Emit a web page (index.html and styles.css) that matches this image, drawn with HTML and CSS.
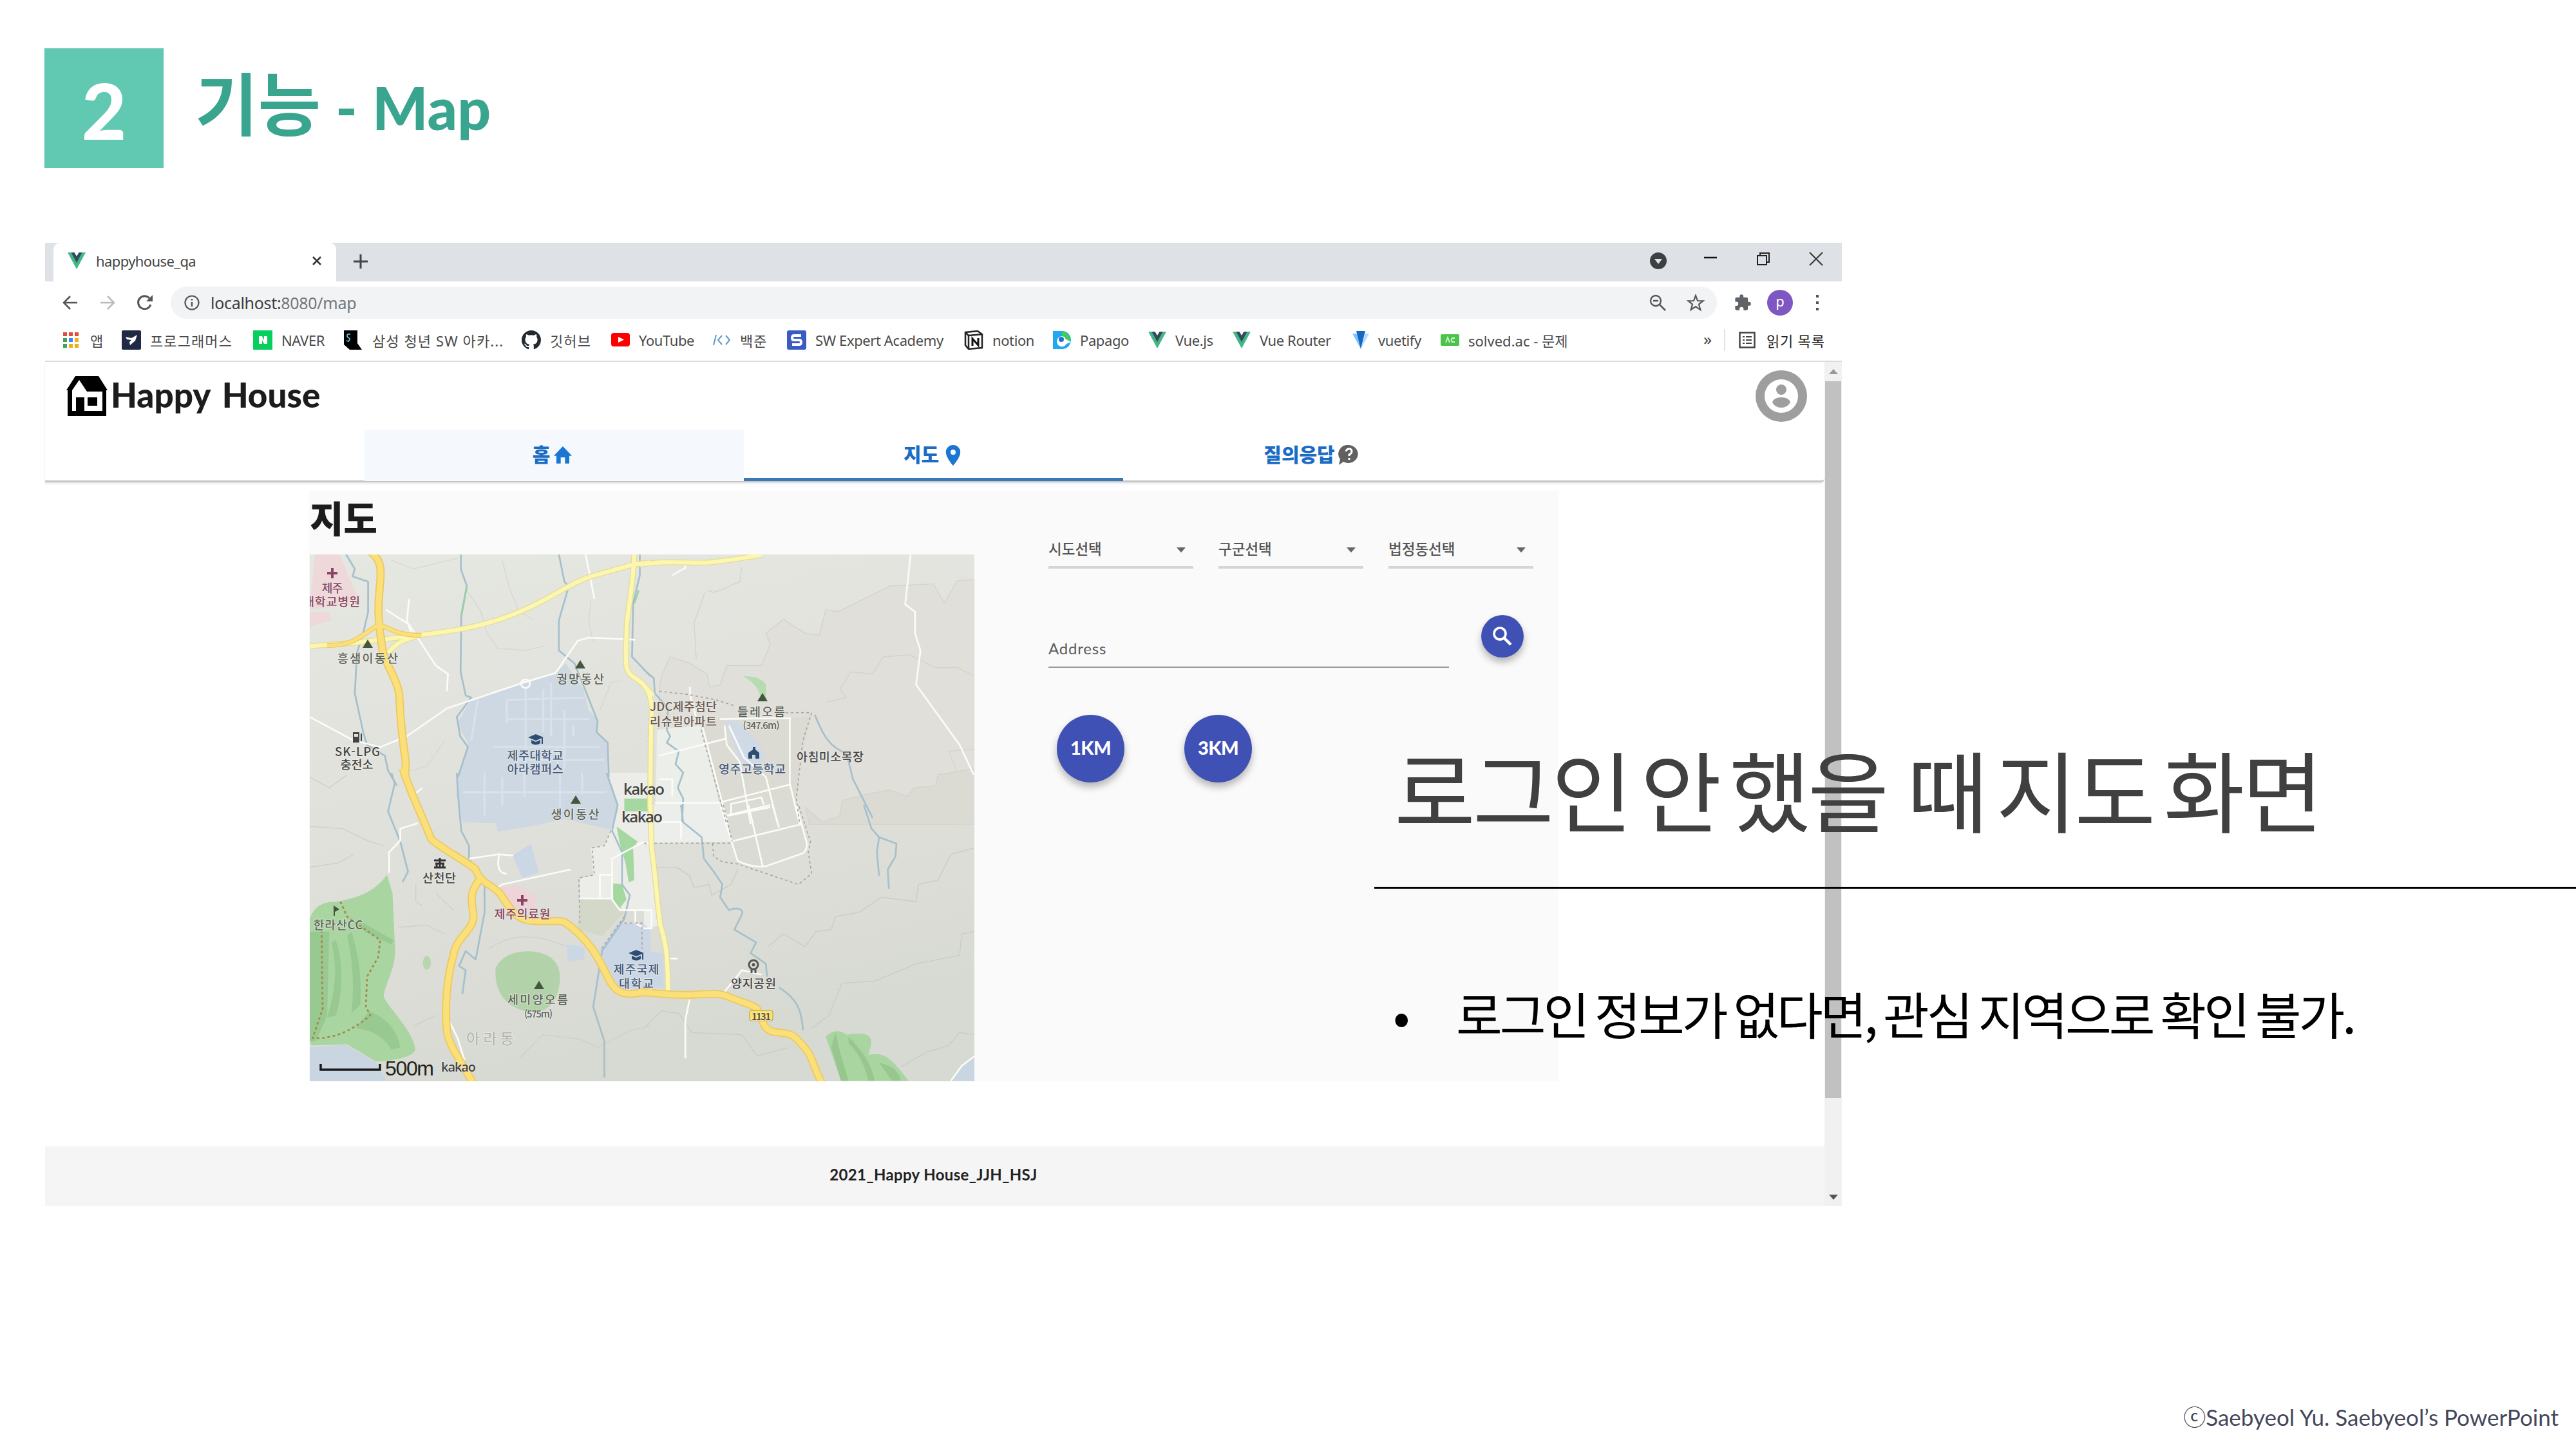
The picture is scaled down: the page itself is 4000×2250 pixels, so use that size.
FILE: index.html
```html
<!DOCTYPE html>
<html lang="ko">
<head>
<meta charset="utf-8">
<title>기능 - Map</title>
<link rel="stylesheet" href="styles.css">
</head>
<body>
<svg class="defs" width="0" height="0" aria-hidden="true">
  <symbol id="vue" viewBox="0 0 28 26"><path d="M0 0H28L14 26Z" fill="#41b883"/><path d="M5.500 0H22.500L14 16Z" fill="#34495e"/><path d="M10.500 0H17.500L14 6Z" fill="#fff"/></symbol>
  <symbol id="cap" viewBox="0 0 24 18"><path d="M12 0 24 5 12 10 0 5Z"/><path d="M5 9v5q7 5 14 0V9l-7 3Z"/><path d="M21 6h2v9h-2z"/></symbol>
</svg>
<main class="slide">
  <header class="slide-head">
    <div class="badge">2</div>
    <h1><span class="ko">기능</span><span>-</span><span>Map</span></h1>
  </header>

  <section class="browser">
    <div class="tabstrip">
      <div class="tab">
        <svg width="28" height="26"><use href="#vue"/></svg>
        <span class="tab-title">happyhouse_qa</span>
        <svg width="16" height="16" viewBox="0 0 16 16"><path d="M2 2 14 14M14 2 2 14" stroke="#333" stroke-width="2.500"/></svg>
      </div>
      <svg class="plus" width="24" height="24" viewBox="0 0 24 24"><path d="M12 1V23M1 12H23" stroke="#444" stroke-width="3"/></svg>
      <div class="win">
        <svg width="28" height="28" viewBox="0 0 28 28"><circle cx="14" cy="14" r="13" fill="#3c4043"/><path d="M8 11H20L14 19Z" fill="#dee1e6"/></svg>
        <svg width="22" height="22" viewBox="0 0 22 22"><path d="M1 9H21" stroke="#111" stroke-width="2.500"/></svg>
        <svg width="22" height="22" viewBox="0 0 22 22"><path d="M2 6H16V20H2ZM6 5V2H20V16H17" fill="none" stroke="#222" stroke-width="2"/></svg>
        <svg width="22" height="22" viewBox="0 0 22 22"><path d="M1 1 21 21M21 1 1 21" stroke="#333" stroke-width="2"/></svg>
      </div>
    </div>
    <div class="toolbar">
      <svg width="24" height="24" viewBox="0 0 24 24"><path d="M23 12H2M12 2 2 12 12 22" fill="none" stroke="#555" stroke-width="2.600"/></svg>
      <svg width="24" height="24" viewBox="0 0 24 24"><path d="M1 12H22M12 2 22 12 12 22" fill="none" stroke="#bbb" stroke-width="2.600"/></svg>
      <svg width="26" height="26" viewBox="0 0 26 26"><path d="M22 16A10 10 0 1 1 20 6" fill="none" stroke="#555" stroke-width="3"/><path d="M25 1V11H15Z" fill="#555"/></svg>
      <div class="omnibox">
        <svg width="24" height="24" viewBox="0 0 24 24"><circle cx="12" cy="12" r="10.500" fill="none" stroke="#555" stroke-width="2.200"/><path d="M12 11V18M12 6V8.500" stroke="#555" stroke-width="2.400"/></svg>
        <span class="url">localhost:<i>8080/map</i></span>
        <svg class="zoom" width="26" height="26" viewBox="0 0 26 26"><circle cx="10" cy="10" r="8" fill="none" stroke="#555" stroke-width="2.300"/><path d="M6 10H14M16 16 25 25" stroke="#555" stroke-width="2.500"/></svg>
        <svg width="28" height="28" viewBox="0 0 28 28"><path d="M14 3 17 11 25.500 11.300 19 16.500 21.300 25 14 20 6.700 25 9 16.500 2.500 11.300 11 11Z" fill="none" stroke="#555" stroke-width="2.200"/></svg>
      </div>
      <svg width="28" height="28" viewBox="0 0 24 24"><path fill="#5f6368" d="M20.500 11H19V7a2 2 0 0 0-2-2h-4V3.500a2.500 2.500 0 0 0-5 0V5H4a2 2 0 0 0-2 2v3.800h1.500a2.700 2.700 0 0 1 0 5.400H2V20a2 2 0 0 0 2 2h3.800v-1.500a2.700 2.700 0 0 1 5.400 0V22H17a2 2 0 0 0 2-2v-4h1.500a2.500 2.500 0 0 0 0-5z"/></svg>
      <div class="profile">p</div>
      <svg class="kebab" width="6" height="24" viewBox="0 0 6 24"><path d="M1 0h4v4H1zM1 10h4v4H1zM1 20h4v4H1z" fill="#555"/></svg>
    </div>
    <div class="bookmarks">
      <div class="bm"><svg width="24" height="24" viewBox="0 0 24 24"><path d="M0 0h6v6H0zM9 0h6v6H9zM18 0h6v6h-6z" fill="#e24a3c"/><path d="M0 9h6v6H0zM0 18h6v6H0z" fill="#3aa757"/><path d="M9 9h6v6H9z" fill="#4285f4"/><path d="M18 9h6v6h-6zM9 18h6v6H9zM18 18h6v6h-6z" fill="#f0ad1d"/></svg><span class="l19">앱</span></div>
      <div class="bm"><svg width="30" height="30" viewBox="0 0 30 30"><rect width="30" height="30" rx="2" fill="#1f2a44"/><path d="M6 10 15 12 24 7 21 16 13 23 12 18 15 15 8 14Z" fill="#fff"/></svg><span class="wide">프로그래머스</span></div>
      <div class="bm"><svg width="30" height="30" viewBox="0 0 30 30"><rect width="30" height="30" fill="#06cf5d"/><path d="M9 9h5l3 6V9h5v12h-5l-3-6v6H9z" fill="#fff"/></svg><span>NAVER</span></div>
      <div class="bm"><svg width="30" height="30" viewBox="0 0 30 30"><path d="M0 0H21V20L28 30H9L0 22Z" fill="#000"/><path d="M10 6Q5 5 5 8T8 12 7 17L4 16" fill="none" stroke="#6cc3d5" stroke-width="1.800"/></svg><span class="wide">삼성 청년 SW 아카...</span></div>
      <div class="bm"><svg width="30" height="30" viewBox="0 0 16 16"><path fill="#24292e" d="M8 0C3.580 0 0 3.580 0 8c0 3.540 2.290 6.530 5.470 7.590.4.070.55-.17.55-.38v-1.490c-2.010.37-2.530-.49-2.690-.94-.09-.23-.48-.94-.82-1.130-.28-.15-.68-.52-.01-.53.63-.01 1.080.58 1.230.82.720 1.210 1.870.87 2.330.66.070-.52.28-.87.51-1.070-1.780-.2-3.640-.89-3.640-3.950 0-.87.31-1.590.82-2.150-.08-.2-.36-1.020.08-2.120 0 0 .67-.21 2.200.82a7.600 7.600 0 0 1 4 0c1.530-1.040 2.200-.82 2.200-.82.44 1.100.16 1.920.08 2.120.51.56.82 1.270.82 2.150 0 3.070-1.870 3.750-3.650 3.950.29.25.54.73.54 1.480v2.200c0 .21.15.46.55.38A8 8 0 0 0 16 8c0-4.420-3.580-8-8-8z"/></svg><span class="wide">깃허브</span></div>
      <div class="bm"><svg width="29" height="21" viewBox="0 0 29 21"><rect width="29" height="21" rx="4" fill="#f00"/><path d="M11 6 20 10.500 11 15Z" fill="#fff"/></svg><span>YouTube</span></div>
      <div class="bm"><svg width="28" height="18" viewBox="0 0 28 18"><path d="M5 1 1 17M14 2 8 9 14 16M20 2 26 9 20 16" fill="none" stroke="#5b9bd0" stroke-width="2"/></svg><span class="wide">백준</span></div>
      <div class="bm"><svg width="30" height="30" viewBox="0 0 30 30"><rect width="30" height="30" rx="3" fill="#3b5bc4"/><path d="M22 8H11Q8 8 8 11.500T11 15H19Q22 15 22 18.500T19 22H8" fill="none" stroke="#fff" stroke-width="4"/></svg><span>SW Expert Academy</span></div>
      <div class="bm"><svg width="30" height="30" viewBox="0 0 30 30"><path d="M2 3 21 1 28 6V27L7 29 2 23ZM2 3 7 8V29M7 8 28 6" fill="#fff" stroke="#222" stroke-width="2.500"/><path d="M13 24V13L22 23V12" fill="none" stroke="#111" stroke-width="3"/></svg><span>notion</span></div>
      <div class="bm"><svg width="28" height="28" viewBox="0 0 28 28"><path d="M0 0H14A14 14 0 0 1 14 28H0Z" fill="#20a8f0"/><path d="M14 1A13 13 0 0 1 27 16L14 13Z" fill="#3ecf5a"/><path d="M19 12 28 17 21 20A8 8 0 1 1 19 10" fill="#fff"/><circle cx="13" cy="13" r="4" fill="#2a6fd0"/></svg><span>Papago</span></div>
      <div class="bm"><svg width="28" height="26"><use href="#vue"/></svg><span>Vue.js</span></div>
      <div class="bm"><svg width="28" height="26"><use href="#vue"/></svg><span>Vue Router</span></div>
      <div class="bm"><svg width="26" height="28" viewBox="0 0 26 28"><path d="M0 4H8L13 28Z" fill="#7bc6ff"/><path d="M6 0H20L13 28Z" fill="#1867c0"/><path d="M20 4H26L13 28Z" fill="#aeddff"/></svg><span>vuetify</span></div>
      <div class="bm"><svg width="29" height="18" viewBox="0 0 29 18"><rect width="29" height="18" rx="2" fill="#4cc44c"/><path d="M8 13 11 5 14 13M22 6H18L16.500 9 18 12H22" fill="none" stroke="#d6f5d6" stroke-width="1.800"/></svg><span class="solved">solved.ac - 문제</span></div>
      <div class="bm more">»</div>
      <div class="bm reading"><svg width="26" height="26" viewBox="0 0 26 26"><path d="M1.500 1.500H24.500V24.500H1.500Z" fill="none" stroke="#444" stroke-width="2.500"/><path d="M6 8h3M6 13h3M6 18h3M11 8h9M11 13h9M11 18h9" stroke="#444" stroke-width="2"/></svg><span>읽기 목록</span></div>
    </div>

    <div class="viewport">
      <div class="page">
        <header class="app-head">
          <div class="brand">
            <svg width="64" height="62" viewBox="0 0 64 62"><path d="M14 0H50L64 22H62V62H2V22H0Z"/><path d="M20 6 32 24H56V54H9V22Z" fill="#fff"/><path d="M33 33H48V46H33ZM15 33H28V56H15Z"/></svg>
            <span>Happy House</span>
            <svg class="account" width="80" height="80" viewBox="0 0 80 80"><circle cx="40" cy="40" r="40" fill="#9e9e9e"/><circle cx="40" cy="40" r="26" fill="#fff"/><circle cx="40" cy="30" r="8" fill="#9e9e9e"/><path d="M26 50Q28 42 40 42T54 50Q49 58 40 58T26 50Z" fill="#9e9e9e"/></svg>
          </div>
          <nav class="tabs">
            <a class="hover">홈<svg width="32" height="28" viewBox="0 0 24 21"><path fill="#1976d2" d="M9.500 20v-7h5v7h5v-9h3L12 0 1.500 11h3v9z"/></svg></a>
            <a class="active">지도<svg class="pin" width="24" height="32" viewBox="0 0 14 20"><path fill="#1976d2" fill-rule="evenodd" d="M7 0a7 7 0 0 0-7 7c0 5.200 7 13 7 13s7-7.800 7-13a7 7 0 0 0-7-7m0 9.500A2.500 2.500 0 1 1 7 4.500a2.500 2.500 0 0 1 0 5z"/></svg></a>
            <a>질의응답<svg class="help" width="34" height="32" viewBox="0 0 34 32"><path d="M18 0A15 14 0 1 1 9 26L2 31 4 22A15 14 0 0 1 18 0Z" fill="#616161"/><path d="M13 10Q14 6 18 6T22 10Q22 13 18 15V17M18 20V23" fill="none" stroke="#fff" stroke-width="3"/></svg></a>
          </nav>
        </header>

        <div class="content">
          <div class="map-col">
            <h2>지도</h2>
            <svg class="map" width="1032" height="818" viewBox="481 861 1032 818">
              <defs>
                <linearGradient id="ground" x1="0" y1="0" x2=".25" y2="1"><stop offset="0" stop-color="#e5e7e1"/><stop offset=".5" stop-color="#e1e1dc"/><stop offset="1" stop-color="#d7dad2"/></linearGradient>
              </defs>
              <rect x="481" y="861" width="1032" height="818" fill="url(#ground)"/>
              <!-- land shading -->
              <g transform="translate(1000 850) scale(.338 .3333)" fill="#e0dfda" stroke="#d3d3cb" stroke-width="4">
                <path d="M80 600 120 510 210 540 290 590 300 650 350 640 380 550 540 550 580 450 560 400 640 335 740 400 805 410 835 290 890 300 1130 180 1330 170 1380 260 1440 155 1518 150V1290H60L70 670Z"/>
                <path d="M840 720 930 700 900 660 950 580 1050 590 1100 510 1220 500 1340 560 1440 560 1518 600" fill="none"/>
                <path d="M1518 1060 1440 1050 1400 950 1518 940M240 520 230 350 280 210M290 200 320 210 350 200 440 160 450 90" fill="none"/>
                <path d="M1020 1150 1130 1130 1210 1160 1240 1120 1340 1110 1350 1060 1518 1030V1290H760L740 1210 820 1280 900 1250 910 1180Z" fill="#dbdbd4"/>
              </g>
              <g transform="translate(1000 1250) scale(.338 .3333)" fill="none" stroke="#c9ccc4" stroke-width="4">
                <path d="M0 290H150L210 330 230 385 300 370 310 420 400 370 430 300M570 660 640 600 740 660 790 590 860 580 880 520 990 500 1090 430 1250 450 1260 370 1350 350 1410 230 1518 200"/>
                <path d="M770 1040 850 980 910 830 1060 820 1250 740 1450 700 1460 600 1518 590M0 1040 80 960 160 970 220 1060 450 1070 520 1170 660 1130"/>
                <path d="M1180 1220 1300 1150 1400 1120 1450 1060 1518 1070"/>
              </g>
              <g transform="translate(470 750) scale(.3444 .3333)" fill="none" stroke="#d6d7d0" stroke-width="4">
                <path d="M900 360 930 480 970 590 1040 640M740 500 800 590 830 700 880 770 1000 780 1090 760M1300 540 1290 650 1310 740M400 360 500 400 700 350M480 1340 560 1320 640 1200M1340 1060 1390 930 1440 920"/>
              </g>
              <g transform="translate(470 1200) scale(.3444 .3333)" fill="none" stroke="#cfcfc8" stroke-width="4">
                <path d="M32 250 180 260 300 320 370 340M32 440 160 420 230 380M430 720 560 710 640 750M510 520V600L540 620M840 820Q1000 700 1250 840M500 1180 600 1130M980 1330 1080 1220 1250 1240 1330 1280 1480 1200 1568 1180M32 20 120 70 200 10M600 560 680 640"/>
              </g>
              <!-- zones -->
              <g transform="translate(470 750) scale(.3444 .3333)">
                <path d="M55 332H165L260 560 32 590ZM32 600 115 600 130 640 32 670Z" fill="#eed8d9"/>
                <path d="M1185 840 1265 960 1290 1060 1330 1100V1160L1375 1210 1370 1350H705L745 1210 695 1120 760 1010 980 935 1140 890Z" fill="#cdd8e2"/>
                <path d="M920 1010 1270 1000M920 1010V1120M1005 960V1330M1085 960V1160M1120 930V1180M920 1100H1290M1180 1060V1330M860 1230H1340M1220 1130V1180M960 1290H1360M790 1010 760 1200M1150 1240V1340" stroke="#d9e2ec" stroke-width="9" fill="none"/>
              </g>
              <g transform="translate(1000 850) scale(.338 .3333)">
                <path d="M60 850 260 830 400 1370 50 1370Z" fill="#eceee9"/>
                <path d="M260 830 350 800H670L770 780 720 990 700 1170 715 1290H370Z" fill="#dbdbd4"/>
                <path d="M370 810H430L530 920 560 980 500 1030 440 990Z" fill="#d0dae6"/>
                <path d="M455 600Q540 600 560 640V705H535Q530 640 455 600Z" fill="#b5dcae"/>
              </g>
              <g transform="translate(1000 1250) scale(.338 .3333)">
                <path d="M350 0 430 260 540 290 740 220 750 180 700 0Z" fill="#dbdbd5"/>
                <path d="M0 0H350L400 170 50 178 0 170ZM0 178H30L75 560 0 580Z" fill="#eceeeb"/>
                <path d="M0 680 90 690V850H0Z" fill="#ccd7e5"/>
                <path d="M835 1080C860 1050 900 1045 930 1070 1000 1060 1060 1060 1040 1130L1030 1165C1100 1150 1130 1170 1215 1285H905Z" fill="#a9d5a0"/>
                <path d="M880 1060 900 1150 940 1285H905L860 1130ZM940 1080Q1040 1180 1060 1285H1030Q1010 1180 940 1110ZM1080 1200Q1170 1220 1180 1285H1140Z" fill="#97c78f"/>
                <path d="M1410 1285 1460 1215 1518 1170V1285Z" fill="#c9d6e2"/>
                <path d="M1410 1285 1460 1215 1518 1170" fill="none" stroke="#fbfbf8" stroke-width="8"/>
              </g>
              <g transform="translate(470 1200) scale(.3444 .3333)">
                <path d="M703 0H1370L1420 110V170L1390 265 1180 215 1050 245 880 275 870 235 720 230 700 100Z" fill="#cdd8e2"/>
                <path d="M720 90H1370M820 0V200M900 20V150M1000 0V110M1160 0V160M1260 0V100" stroke="#d9e2ec" stroke-width="9" fill="none"/>
                <path d="M1370 0H1568V640H1430L1400 600 1250 585V490L1310 480 1300 350 1360 340 1390 265 1425 170Z" fill="#ecede9"/>
                <path d="M1250 590H1400L1450 650 1350 760 1240 730Z" fill="#d3d8c8"/>
                <path d="M1450 120H1568V180H1450ZM1415 250 1510 320 1490 350 1495 500 1470 510 1455 420 1430 330ZM1400 515 1440 520 1460 590 1430 630 1400 600Z" fill="#a5d8a0"/>
                <path d="M380 475 405 560 415 790C430 900 370 980 365 1040 380 1090 500 1200 508 1290 500 1320 430 1340 330 1345L200 1265 40 1270 32 1250V680C60 600 120 600 160 600 250 580 320 560 380 475Z" fill="#a9d5a0"/>
                <path d="M32 740H120L110 1130 60 1250H32ZM240 680 410 780 400 800 280 740ZM150 780Q200 950 150 1130L110 1140Q170 950 130 790ZM220 740Q270 900 260 1080L220 1120Q240 930 200 760ZM300 1110Q420 1160 440 1280L400 1290Q350 1200 240 1190Z" fill="#98c990"/>
                <path d="M32 1280 190 1265 330 1350 380 1440H32Z" fill="#c9d6e2"/>
                <path d="M870 910C900 850 950 835 1010 832 1080 830 1160 860 1160 950 1160 1060 1100 1120 1040 1115 960 1110 860 1060 870 910Z" fill="#b2d3aa"/>
                <ellipse cx="560" cy="885" rx="18" ry="32" fill="#b9d5ad"/>
                <path d="M870 540 960 525 1055 580 1040 640H920Z" fill="#eed3d8"/>
                <path d="M1340 830 1420 700 1530 700 1568 730V1000L1440 1010 1390 950ZM945 385 1030 330 1065 465 990 490ZM1190 800 1270 810V870L1195 880Z" fill="#ccd7e6"/>
              </g>
              <!-- streams -->
              <g fill="none" stroke="#a6c0cb" stroke-width="8" stroke-linejoin="round">
                <path transform="translate(470 750) scale(.3444 .3333)" d="M195 332 235 400 225 435 295 460V600L275 690 245 790 235 980 275 1170 290 1220 370 1270 385 1340 425 1410M713 332V400L740 480 715 620 712 880 735 990 760 1000 695 1090 710 1180 745 1230 700 1370M1155 332 1180 460 1200 480 1155 640V780L1225 840 1280 980 1330 1110 1325 1160 1375 1210 1380 1370M1520 332V430L1490 560 1485 810 1568 900"/>
                <path transform="translate(470 1200) scale(.3444 .3333)" d="M400 0 415 50 385 180 440 320 475 460 450 510M695 0 700 100 715 270 750 340V400L820 520V650L780 870 735 830 705 900 735 920 720 1030M1370 0 1420 150 1395 270 1440 370V520L1475 570 1450 680 1350 830 1310 1090 1360 1250V1420"/>
                <path transform="translate(1000 850) scale(.338 .3333)" d="M0 570 45 610 50 680 110 750 105 850 120 880 105 910 160 950 145 1010 180 1050 155 1120 180 1170 175 1280M785 780C820 870 850 930 930 960L960 1080 1050 1260"/>
                <path transform="translate(1000 1250) scale(.338 .3333)" d="M170 0 180 80 265 150 275 250 320 310 360 370 350 430 390 490C430 475 460 485 450 510L415 580 515 640 490 690 560 740 565 800M620 850C700 900 725 950 730 1050M1010 0 1045 110 1080 150 1160 180 1155 240 1120 300 1125 390M1080 150 1070 220 1080 330"/>
                <path transform="translate(470 750) scale(.3444 .3333)" d="M1515 500 1495 560M740 480 715 620" stroke="#9bcda6"/>
              </g>
              <!-- minor roads -->
              <g fill="none" stroke="#fbfbf8" stroke-width="8" stroke-linejoin="round">
                <path transform="translate(470 750) scale(.3444 .3333)" d="M32 1090 230 1200 350 1230 470 1180 650 1050 980 935 1140 885 1240 735 1290 720 1500 730M375 590 480 660 530 740 600 850 655 890 650 970M480 540 470 640 490 700M1275 332 1295 430 1315 540M985 935a20 20 0 1 0 40 0a20 20 0 1 0-40 0"/>
                <path transform="translate(470 1200) scale(.3444 .3333)" d="M390 465V370L440 315V260L520 235M750 400 880 380 950 385M885 385Q870 470 920 470M870 540 900 520 1210 450M1395 400 1530 325H1568M1395 400V590L1430 640H1568M1340 580V475H1390M1250 585H1390M665 1165 700 1240 730 1340M1500 640V700L1540 725M510 95 540 70"/>
                <path transform="translate(1000 850) scale(.338 .3333)" d="M1225 35 1200 265 1245 300V400L1270 480 1250 640 1450 920 1515 1060M270 840 385 1290M70 970 380 890M370 830 380 920 440 1000 490 1290M350 800 670 795V1100L715 1290M390 830 460 980 560 1070 615 1290M360 1185 670 1105M375 1250 580 1200M400 1240V1195L540 1165 550 1200M50 1190H350M190 70V95L130 130M210 650 215 700 250 830M70 1080H130V1160"/>
                <path transform="translate(1000 1250) scale(.338 .3333)" d="M350 0 430 260Q500 295 560 285L730 225Q760 200 740 150L700 0M400 170 720 90M385 50 580 10M480 0 545 285M590 0 620 105M210 905 190 1000V1180M370 870 450 770 540 790M120 715H155M0 490H35V575H0M60 80H170V160"/>
              </g>
              <g fill="none" stroke="#a9a69c" stroke-width="5" stroke-dasharray="12 12">
                <path transform="translate(1000 850) scale(.338 .3333)" d="M70 670 200 685 330 710 420 740M650 770H770L730 900 700 1170 715 1290M262 850 380 1290M20 850V1290"/>
                <path transform="translate(1000 1250) scale(.338 .3333)" d="M0 178H400M315 180 320 240 360 265 430 275 710 370 770 320 755 220 765 170 710 0M365 0 405 170M45 180 90 610"/>
                <path transform="translate(470 1200) scale(.3444 .3333)" d="M1390 270 1360 340 1305 350 1315 475 1245 490 1250 700M1450 670 1340 830M1450 700H1530V820"/>
                <path transform="translate(470 1200) scale(.3444 .3333)" d="M170 600 200 670 350 780 340 860 290 950 285 1090 305 1130C200 1220 120 1240 45 1235L90 1100 85 740" stroke="#a58a50" stroke-width="8"/>
              </g>
              <!-- main roads -->
              <g fill="none" stroke-linejoin="round">
                <g stroke="#e3dc9c" stroke-width="27">
                  <path transform="translate(470 750) scale(.3444 .3333)" d="M32 760 230 745 510 710C700 690 850 660 1000 590 1150 520 1200 470 1300 435L1490 380 1568 370M1495 332C1490 500 1460 600 1460 700 1455 850 1450 880 1500 910 1550 940 1545 960 1580 990M385 790C420 750 450 730 510 715"/>
                  <path transform="translate(1000 850) scale(.338 .3333)" d="M-20 80C100 60 200 75 300 70 400 60 450 50 540 35M-10 630C40 680 40 750 32 850L28 1200 30 1230"/>
                  <path transform="translate(1000 1250) scale(.338 .3333)" d="M30 0 35 200C50 300 60 450 75 560 100 640 110 700 110 870"/>
                </g>
                <g stroke="#fcf6ae" stroke-width="19">
                  <path transform="translate(470 750) scale(.3444 .3333)" d="M32 760 230 745 510 710C700 690 850 660 1000 590 1150 520 1200 470 1300 435L1490 380 1568 370M1495 332C1490 500 1460 600 1460 700 1455 850 1450 880 1500 910 1550 940 1545 960 1580 990M385 790C420 750 450 730 510 715"/>
                  <path transform="translate(1000 850) scale(.338 .3333)" d="M-20 80C100 60 200 75 300 70 400 60 450 50 540 35M-10 630C40 680 40 750 32 850L28 1200 30 1230"/>
                  <path transform="translate(1000 1250) scale(.338 .3333)" d="M30 0 35 200C50 300 60 450 75 560 100 640 110 700 110 870"/>
                </g>
                <g stroke="#ecc964" stroke-width="37">
                  <path transform="translate(470 750) scale(.3444 .3333)" d="M305 320C370 370 350 430 345 520 335 620 350 700 360 780 380 860 420 900 435 980 440 1100 450 1200 465 1300L462 1360"/>
                  <path transform="translate(470 750) scale(.3444 .3333)" stroke-width="22" d="M110 758C250 755 270 700 345 660 400 680 430 710 535 710"/>
                  <path transform="translate(470 1200) scale(.3444 .3333)" d="M452 -20C480 80 530 180 580 310 650 370 720 400 780 450 800 520 880 530 900 580 930 620 960 690 1040 690 1100 695 1150 685 1180 695 1300 780 1340 880 1370 940 1400 1010 1430 1030 1480 1030L1568 1020M795 500C740 580 770 600 770 680 760 740 690 770 680 850 650 950 640 1100 650 1200 660 1280 720 1350 770 1450"/>
                  <path transform="translate(1000 1250) scale(.338 .3333)" d="M-20 870C60 880 120 885 200 885 300 880 340 875 380 890 450 920 500 930 520 950 550 1030 560 1060 620 1060 680 1065 690 1075 720 1110 780 1170 770 1210 820 1300"/>
                </g>
                <g stroke="#fbdf78" stroke-width="26">
                  <path transform="translate(470 750) scale(.3444 .3333)" d="M305 320C370 370 350 430 345 520 335 620 350 700 360 780 380 860 420 900 435 980 440 1100 450 1200 465 1300L462 1370"/>
                  <path transform="translate(470 750) scale(.3444 .3333)" stroke-width="15" d="M110 758C250 755 270 700 345 660 400 680 430 710 535 710"/>
                  <path transform="translate(470 1200) scale(.3444 .3333)" d="M452 -20C480 80 530 180 580 310 650 370 720 400 780 450 800 520 880 530 900 580 930 620 960 690 1040 690 1100 695 1150 685 1180 695 1300 780 1340 880 1370 940 1400 1010 1430 1030 1480 1030L1575 1020M795 500C740 580 770 600 770 680 760 740 690 770 680 850 650 950 640 1100 650 1200 660 1280 720 1350 770 1450"/>
                  <path transform="translate(1000 1250) scale(.338 .3333)" d="M-20 870C60 880 120 885 200 885 300 880 340 875 380 890 450 920 500 930 520 950 550 1030 560 1060 620 1060 680 1065 690 1075 720 1110 780 1170 770 1210 820 1300"/>
                </g>
              </g>
              <!-- markers -->
              <g fill="#45563f">
                <path d="M571 993 579 1006H563ZM901 1025 909 1038H893ZM894 1235 902 1248H886ZM837 1523 845 1536H829ZM1184 1076 1192 1089H1176Z"/>
                <path d="M518 1406 527 1412 520 1416V1422H518Z"/>
              </g>
              <path d="M516 882V898M508 890H524M811 1390V1406M803 1398H819" stroke="#8a4560" stroke-width="4"/>
              <g fill="#2f4d73"><use href="#cap" x="820" y="1140" width="24" height="18"/><use href="#cap" x="976" y="1475" width="24" height="18"/><path d="M1162 1178V1169L1169 1164V1160H1173V1164L1179 1169V1178H1173V1172H1168V1178Z"/></g>
              <path fill="#444" fill-rule="evenodd" d="M548 1137h10v16h-10zM550 1140v4h6v-4zM560 1139h2v12h-2z"/>
              <path d="M674 1336H692M676 1341H690M678 1341V1348M683 1332V1348M688 1341V1348M674 1347H692" stroke="#333" stroke-width="3"/>
              <g fill="none" stroke="#555" stroke-width="3"><circle cx="1170" cy="1498" r="7"/><path d="M1167 1505V1511M1173 1505V1511"/></g>
              <circle cx="1170" cy="1498" r="2.500" fill="#555"/>
              <rect x="1164" y="1569" width="36" height="16" rx="3" fill="#fbe26e" stroke="#b99b2d"/>
              <g class="labels">
                <g fill="#8a4560"><text x="516" y="912" textLength="33">제주</text><text x="515" y="933" textLength="88">대학교병원</text><text x="811" y="1418" textLength="87">제주의료원</text></g>
                <g fill="#5c6258"><text x="571" y="1021" textLength="94">흥샘이동산</text><text x="901" y="1053" textLength="74">궝망동산</text><text x="893" y="1263" textLength="75">생이동산</text><text x="835" y="1551" textLength="94">세미양오름</text><text x="836" y="1573" textLength="44" class="sm">(575m)</text><text x="1182" y="1104" textLength="74">들레오름</text><text x="1182" y="1125" textLength="57" class="sm">(347.6m)</text><text x="525" y="1435" textLength="77">한라산CC</text></g>
                <g fill="#444"><text x="555" y="1166" textLength="70">SK-LPG</text><text x="554" y="1186" textLength="51">충전소</text><text x="682" y="1362" textLength="52">산천단</text><text x="1170" y="1526" textLength="70">양지공원</text><text x="1289" y="1174" textLength="104">아침미소목장</text></g>
                <g fill="#44597a"><text x="831" y="1172" textLength="87">제주대학교</text><text x="831" y="1193" textLength="87">아라캠퍼스</text><text x="1168" y="1193" textLength="104">영주고등학교</text><text x="988" y="1504" textLength="71">제주국제</text><text x="988" y="1526" textLength="54">대학교</text></g>
                <g fill="#6b584c"><text x="1061" y="1096" textLength="104">JDC제주첨단</text><text x="1061" y="1119" textLength="104">리슈빌아파트</text></g>
                <text x="761" y="1611" textLength="74" fill="#b0b0ac" class="dong">아라동</text>
                <text x="1182" y="1577" textLength="30" class="sm bold" fill="#6b5412">1131</text>
                <g class="kakao" fill="#454545"><text x="1000" y="1224" textLength="64">kakao</text><text x="997" y="1267" textLength="64">kakao</text><text x="712" y="1656" textLength="54" class="k-sm">kakao</text></g>
                <text x="636" y="1659" textLength="76" class="scale" fill="#222">500m</text>
              </g>
              <path d="M498 1652V1661H590V1652" fill="none" stroke="#1a1a1a" stroke-width="3.500"/>
            </svg>
          </div>
          <form class="filters">
            <div class="selects">
              <div class="select">시도선택<i></i></div>
              <div class="select">구군선택<i></i></div>
              <div class="select">법정동선택<i></i></div>
            </div>
            <div class="search">
              <div class="address">Address</div>
              <div class="fab small"><svg width="32" height="32" viewBox="0 0 32 32"><circle cx="12" cy="12" r="9" fill="none" stroke="#fff" stroke-width="3.600"/><path d="M18 18 29 29" stroke="#fff" stroke-width="4.500"/></svg></div>
            </div>
            <div class="ranges"><div class="fab">1KM</div><div class="fab">3KM</div></div>
          </form>
        </div>
        <footer class="app-foot">2021_Happy House_JJH_HSJ</footer>
      </div>
      <div class="scrollbar"><i class="up"></i><div class="thumb"></div><i class="down"></i></div>
    </div>
  </section>

  <section class="caption">
    <h3><span>로그인</span><span>안</span><span>했을</span><span>때</span><span>지도</span><span>화면</span></h3>
    <p><span class="dot">•</span><span>로그인 정보가 없다면, 관심 지역으로 확인 불가.</span></p>
  </section>
  <footer class="credit">ⓒSaebyeol Yu. Saebyeol’s PowerPoint</footer>
</main>
</body>
</html>
```
FILE: styles.css
```css
* { box-sizing: border-box; }
body { margin: 0; background: #fff; }
svg { display: block; flex: none; }
.defs { position: absolute; }
i { font-style: normal; }

.slide {
  position: relative;
  width: 4000px;
  height: 2250px;
  padding: 75px 0 0 69px;
  overflow: hidden;
  background: #fff;
  font-family: "Noto Sans", "Noto Sans CJK KR", sans-serif;
}

/* slide heading */
.slide-head { display: flex; height: 186px; }
.badge {
  width: 185px;
  height: 186px;
  background: #61c8b2;
  color: #fff;
  font: 900 120px/192px Lato, sans-serif;
  text-align: center;
}
.slide-head h1 {
  display: flex;
  align-items: baseline;
  margin: 0 0 0 49px;
  padding-top: 6px;
  color: #3aa58f;
  font: 900 91px/150px Lato, sans-serif;
}
.slide-head h1 span + span { margin-left: 23px; }
.slide-head .ko { font: 700 106px/150px "Noto Sans CJK KR", sans-serif; }

/* browser chrome */
.browser { width: 2790px; margin: 116px 0 0 1px; }
.tabstrip { display: flex; height: 60px; background: #dee1e6; }
.tab {
  display: flex;
  align-items: center;
  width: 439px;
  margin-left: 13px;
  padding: 0 22px 4px 22px;
  border-radius: 10px 10px 0 0;
  background: #fff;
  color: #444;
  font-size: 22px;
}
.tab-title { flex: 1; margin-left: 16px; letter-spacing: -.6px; }
.plus { margin: 17px 0 0 26px; }
.win { display: flex; flex: 1; justify-content: flex-end; gap: 60px; padding: 14px 29px 0 0; }
.win svg:first-child { margin-right: -4px; }

.toolbar { display: flex; align-items: center; height: 66px; padding-left: 27px; background: #fff; }
.toolbar > svg:nth-child(2) { margin-left: 34px; }
.toolbar > svg:nth-child(3) { margin-left: 33px; }
.omnibox {
  display: flex;
  align-items: center;
  width: 2401px;
  height: 50px;
  margin: 0 26px 0 27px;
  padding: 0 19px 0 21px;
  border-radius: 25px;
  background: #f1f3f4;
}
.url { flex: 1; margin-left: 17px; color: #3a3d40; font-size: 25px; letter-spacing: -.3px; }
.url i { color: #74777a; }
.zoom { margin-right: 32px; }
.profile {
  width: 40px;
  height: 40px;
  margin: 0 35px 0 24px;
  border-radius: 50%;
  background: #7e57c2;
  color: #fff;
  font-size: 22px;
  line-height: 34px;
  text-align: center;
}

.bookmarks {
  display: grid;
  grid-template-columns: 91px 204px 141px 276px 139px 158px 115px 275px 138px 148px 131px 186px 137px 408px 32px 1fr;
  height: 59px;
  padding: 0 0 8px 28px;
  border-bottom: 2px solid #dcdcdc;
  background: #fff;
  color: #4a4a4a;
  font-size: 22px;
  letter-spacing: -.4px;
  white-space: nowrap;
}
.bm { display: flex; align-items: center; gap: 14px; }
.bm .l19 { margin-left: 4px; }
.bm .wide { letter-spacing: 1.1px; }
.bm .solved { letter-spacing: 0; }
.bm.more { padding-bottom: 4px; font-size: 26px; }
.bm.reading { height: 34px; align-self: center; padding-left: 21px; border-left: 2px solid #e4e4e4; gap: 17px; color: #222; letter-spacing: .8px; }

/* page inside the browser */
.viewport { display: flex; height: 1311px; }
.page {
  display: flex;
  flex-direction: column;
  width: 2763px;
  background: #fff;
  font-family: Lato, "Noto Sans CJK KR", sans-serif;
}
.app-head { height: 187px; border-bottom: 3px solid #c6c6c6; border-radius: 0 0 6px 0; box-shadow: 0 2px 3px #e8e8e8; }
.brand { display: flex; align-items: center; height: 105px; padding-left: 33px; color: #1c1c1c; }
.brand span { flex: 1; margin-left: 5px; padding-bottom: 4px; font-size: 53px; font-weight: 900; word-spacing: 6px; }
.account { margin-right: 27px; }
.tabs { display: flex; height: 80px; padding-left: 496px; }
.tabs a {
  display: flex;
  align-items: center;
  justify-content: center;
  width: 589px;
  height: 80px;
  padding: 0 4px 6px 0;
  color: #1b6cc4;
  font-size: 30px;
  font-weight: 900;
}
.tabs .hover { background: #f5f9fd; }
.tabs .active { border-bottom: 5px solid #3b78ba; padding-bottom: 1px; }
.tabs svg { margin: 6px 0 0 4px; }
.tabs .pin { margin-left: 10px; }

.content {
  display: flex;
  width: 1940px;
  height: 917px;
  margin: 13px 0 0 410px;
  padding-left: 1px;
  background: #fafafa;
}
.map-col { width: 1032px; }
.map-col h2 { height: 99px; margin: 0; color: #1c1c1c; font: 900 57px/80px "Noto Sans CJK KR", sans-serif; }
.labels text {
  font: 500 18.500px "Noto Sans CJK KR", sans-serif;
  text-anchor: middle;
  dominant-baseline: central;
  paint-order: stroke;
  stroke: #f2f2ee;
  stroke-opacity: .6;
  stroke-width: 2px;
}
.labels .sm { font-size: 15px; }
.labels .dong { font-size: 23px; font-weight: 400; }
.labels .bold { font-weight: 700; }
.labels .kakao text { font: 600 24px "Open Sans", sans-serif; }
.labels .kakao .k-sm { font-size: 20px; }
.labels .scale { font: 32px "Liberation Sans", sans-serif; stroke: none; }

.filters { width: 753px; margin: 67px 0 0 115px; }
.selects { display: flex; gap: 39px; }
.select {
  display: flex;
  align-items: center;
  justify-content: space-between;
  width: 225px;
  height: 54px;
  padding: 0 12px 6px 0;
  border-bottom: 4px solid #d5d5d5;
  color: #555;
  font: 500 22.500px "Noto Sans CJK KR", sans-serif;
}
.select i { margin-top: 6px; border: 7px solid transparent; border-top: 8px solid #666; border-bottom: 0; }
.search { display: flex; margin-top: 72px; }
.address { width: 622px; height: 82px; padding-top: 37px; border-bottom: 2px solid #9a9a9a; color: #5c5c5c; font-size: 24px; line-height: 30px; letter-spacing: .8px; }
.fab {
  display: flex;
  align-items: center;
  justify-content: center;
  width: 105px;
  height: 105px;
  border-radius: 50%;
  background: #3f51b5;
  box-shadow: 0 7px 12px rgba(0, 0, 0, .28);
  color: #fff;
  font-size: 29px;
  font-weight: 900;
  letter-spacing: -.6px;
  padding-bottom: 5px;
}
.fab.small { width: 66px; height: 66px; margin-left: 50px; padding: 0; }
.ranges { display: flex; gap: 93px; margin: 73px 0 0 13px; }
.app-foot {
  height: 93px;
  margin-top: auto;
  padding-right: 4px;
  background: #f5f5f5;
  color: #222;
  font-size: 24px;
  font-weight: 700;
  letter-spacing: .35px;
  line-height: 88px;
  text-align: center;
}

.scrollbar { display: flex; flex-direction: column; align-items: center; width: 27px; background: #f1f1f1; }
.up, .down { border: 7px solid transparent; }
.up { margin-top: 4px; border-bottom: 8px solid #999; }
.thumb { width: 25px; height: 1113px; margin: 11px 0 150px; background: #c1c1c1; }
.down { border-top: 8px solid #555; border-bottom: 0; }

/* note laid over the screenshot window */
.caption { position: absolute; left: 2134px; top: 1123px; width: 1866px; }
.caption h3 {
  display: flex;
  height: 257px;
  margin: 0;
  padding-left: 31px;
  border-bottom: 3px solid #000;
  color: #404040;
  font: 400 137px/200px "Noto Sans CJK KR", sans-serif;
  letter-spacing: -4px;
  white-space: nowrap;
}
.caption h3 span { margin-right: 16px; }
.caption h3 span:nth-child(3) { margin-right: 32px; }
.caption p {
  display: flex;
  margin: 135px 0 0;
  padding-left: 29px;
  color: #000;
  font: 400 78px/116px "Noto Sans CJK KR", sans-serif;
  letter-spacing: -4px;
  word-spacing: -6px;
  white-space: nowrap;
}
.dot { width: 98px; }
.credit {
  position: absolute;
  right: 27px;
  bottom: 28px;
  color: #44475a;
  font: 35px/44px Lato, "Noto Sans CJK KR", sans-serif;
}
```
